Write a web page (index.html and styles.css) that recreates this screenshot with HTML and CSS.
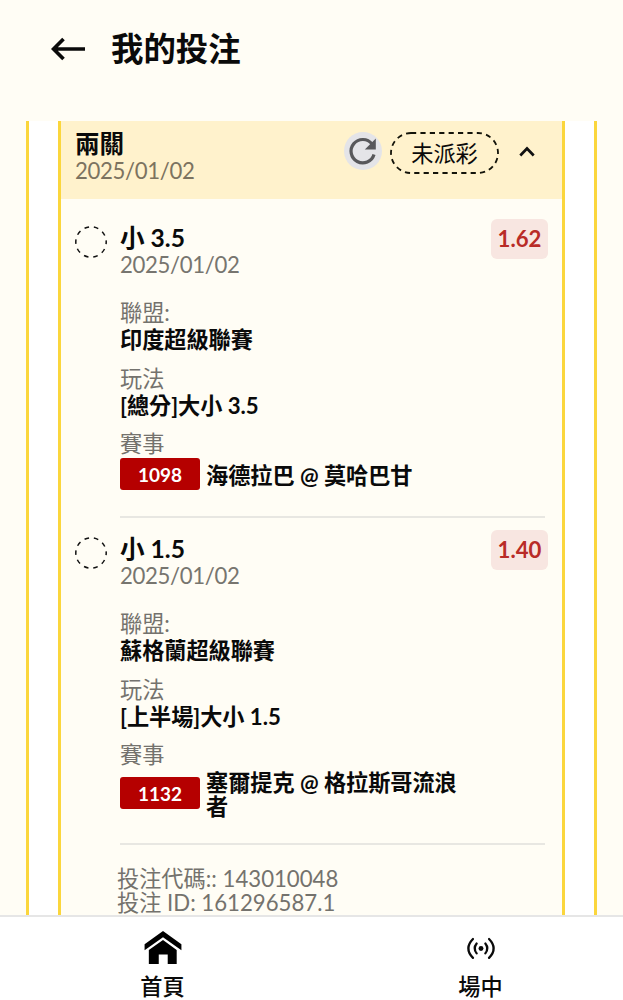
FILE: index.html
```
<!DOCTYPE html>
<html lang="zh-Hant">
<head>
  <meta charset="UTF-8">
  <meta name="viewport" content="width=device-width, initial-scale=1.0">
  <title>我的投注</title>
  <link rel="stylesheet" href="styles.css">
</head>
<body>
  <header class="top-bar">
    <svg class="back-icon" width="34" height="24" viewBox="0 0 34 24" fill="none" stroke="#0a0a0a" stroke-width="3.7">
      <path d="M34 12H3M12.5 2L2.5 12L12.5 22"/>
    </svg>
    <h1>我的投注</h1>
  </header>

  <main class="bets">
    <div class="bets-frame">
      <section class="card">
        <div class="card-header">
          <div class="card-title">
            <h2>兩關</h2>
            <p class="date">2025/01/02</p>
          </div>
          <div class="refresh">
            <svg width="38" height="38" viewBox="0 0 38 38">
              <path d="M30 22.5A11.7 11.7 0 1 1 28 12" fill="none" stroke="#58585b" stroke-width="3.2"/>
              <path d="M31.8 6.6V17.6H20.8Z" fill="#58585b"/>
            </svg>
          </div>
          <div class="status">
            <svg class="status-outline" width="109" height="42" viewBox="0 0 109 42">
              <rect x="1" y="1" width="107" height="40" rx="20" fill="none" stroke="#14140a" stroke-width="1.8" stroke-dasharray="5.2 4.2"/>
            </svg>
            <span>未派彩</span>
          </div>
          <svg class="chevron" width="16" height="11" viewBox="0 0 16 11" fill="none" stroke="#111" stroke-width="2.7">
            <path d="M1.3 9.5L8 2.5L14.7 9.5"/>
          </svg>
        </div>

        <article class="leg">
          <svg class="leg-state" width="32" height="32" viewBox="0 0 32 32">
            <circle cx="16" cy="16" r="15.2" fill="none" stroke="#111" stroke-width="1.5" stroke-dasharray="4.6 4.95" stroke-dashoffset="2.3"/>
          </svg>
          <div class="leg-body">
            <div class="leg-top">
              <div>
                <h3>小 3.5</h3>
                <p class="date">2025/01/02</p>
              </div>
              <span class="odds">1.62</span>
            </div>
            <dl>
              <dt>聯盟:</dt>
              <dd>印度超級聯賽</dd>
              <dt>玩法</dt>
              <dd>[總分]大小 3.5</dd>
              <dt>賽事</dt>
              <dd class="match"><span class="code">1098</span><span class="teams">海德拉巴 @ 莫哈巴甘</span></dd>
            </dl>
          </div>
        </article>

        <article class="leg">
          <svg class="leg-state" width="32" height="32" viewBox="0 0 32 32">
            <circle cx="16" cy="16" r="15.2" fill="none" stroke="#111" stroke-width="1.5" stroke-dasharray="4.6 4.95" stroke-dashoffset="2.3"/>
          </svg>
          <div class="leg-body">
            <div class="leg-top">
              <div>
                <h3>小 1.5</h3>
                <p class="date">2025/01/02</p>
              </div>
              <span class="odds">1.40</span>
            </div>
            <dl>
              <dt>聯盟:</dt>
              <dd>蘇格蘭超級聯賽</dd>
              <dt>玩法</dt>
              <dd>[上半場]大小 1.5</dd>
              <dt>賽事</dt>
              <dd class="match"><span class="code">1132</span><span class="teams">塞爾提克 @ 格拉斯哥流浪者</span></dd>
            </dl>
          </div>
        </article>

        <div class="bet-ids">
          <p>投注代碼:: 143010048</p>
          <p>投注 ID: 161296587.1</p>
        </div>
      </section>
    </div>
  </main>

  <nav class="bottom-nav">
    <a href="#">
      <svg width="40" height="36" viewBox="0 0 40 36" fill="#000">
        <path d="M20 0L39.5 14V20.5L20 6.5L0.5 20.5V14Z"/>
        <path d="M20 9.5L34.5 20V35H25V25H15.5V35H5V20Z"/>
      </svg>
      <span>首頁</span>
    </a>
    <a href="#">
      <svg width="40" height="36" viewBox="0 0 40 36" fill="none" stroke="#0a0a0a" stroke-width="2.4" stroke-linecap="round">
        <circle cx="20" cy="18.5" r="2.6" fill="#0a0a0a" stroke="none"/>
        <path d="M15.4 13.3Q11.2 18.5 15.4 23.7M24.6 13.3Q28.8 18.5 24.6 23.7"/>
        <path d="M11.5 8.5Q1.7 18.5 11.5 28.5M28.5 8.5Q38.3 18.5 28.5 28.5"/>
      </svg>
      <span>場中</span>
    </a>
  </nav>
</body>
</html>
```
FILE: styles.css
```
* {
  box-sizing: border-box;
}
body {
  margin: 0;
  height: 1000px;
  display: flex;
  flex-direction: column;
  overflow: hidden;
  font-family: Lato, "Noto Sans CJK TC", sans-serif;
  font-size: 22.2px;
  line-height: 27px;
  color: #0a0a0a;
  background-color: #fffdf5;
}
h1, h2, h3, p, dl, dd {
  margin: 0;
}
.top-bar {
  height: 121px;
  flex: none;
  display: flex;
  align-items: center;
  gap: 26px;
  padding: 0 51px 23px;
}
.top-bar h1 {
  font-size: 32.4px;
  line-height: 40px;
  font-weight: 700;
}
.bets {
  flex: 1;
  min-height: 0;
  overflow: hidden;
  padding: 0 26px;
}
.bets-frame {
  border: solid #fbd63c;
  border-width: 0 3px;
  padding: 0 29px;
  background-color: #fff;
}
.card {
  border: solid #fbd63c;
  border-width: 0 3px;
  background-color: #fffdf5;
  min-height: 800px;
}
.card-header {
  height: 78px;
  display: flex;
  align-items: flex-start;
  padding: 9px 27px 0 14px;
  background-color: #fff2cc;
}
.card-title {
  flex: 1;
}
.card-title h2 {
  font-size: 24.6px;
  line-height: 27px;
  font-weight: 700;
}
.date {
  color: #77756f;
  letter-spacing: -0.35px;
}
.card-title .date {
  color: #7c7360;
}
.refresh {
  width: 38px;
  height: 38px;
  margin: 2px 8px 0 0;
  border-radius: 50%;
  background-color: #e4e4e8;
}
.status {
  position: relative;
  width: 109px;
  height: 42px;
  margin-top: 2px;
  padding-top: 1px;
  display: flex;
  align-items: center;
  justify-content: center;
}
.status-outline {
  position: absolute;
  inset: 0;
}
.chevron {
  margin: 16px 0 0 20px;
}
.leg {
  display: flex;
  gap: 13px;
  padding: 20px 14px 0 14px;
}
.leg-state {
  flex: none;
  margin-top: 7px;
}
.leg-body {
  flex: 1;
}
.leg-top {
  display: flex;
  justify-content: space-between;
}
.leg-top h3 {
  margin-top: 5px;
  font-size: 24.6px;
  line-height: 27px;
  font-weight: 700;
}
.odds {
  width: 57px;
  height: 40px;
  border-radius: 6px;
  background-color: #f8e6e1;
  color: #b92b27;
  font-weight: 700;
  line-height: 40px;
  text-align: center;
}
.leg dl {
  margin: 21px 3px 0 0;
  padding-bottom: 26px;
  border-bottom: 2px solid #e8e7e2;
}
.leg dt {
  color: #74726d;
  height: 27px;
}
.leg dd {
  font-weight: 700;
  letter-spacing: -0.05px;
  margin-bottom: 11.5px;
}
.leg dd.match {
  display: flex;
  align-items: center;
  gap: 6px;
  margin: 1px 0 0;
  min-height: 32px;
}
.code {
  flex: none;
  width: 80px;
  height: 32px;
  border-radius: 3px;
  background-color: #b50000;
  color: #fff;
  font-size: 19px;
  line-height: 33px;
  text-align: center;
}
.teams {
  width: 252px;
  padding-top: 2px;
  margin-bottom: -2px;
  line-height: 24px;
}
.leg + .leg {
  padding-top: 12px;
}
.bet-ids {
  padding: 22px 0 0 56px;
  line-height: 24px;
  color: #74726d;
}
.bottom-nav {
  flex: none;
  width: 640px;
  height: 85px;
  padding-left: 4px;
  display: flex;
  border-top: 2px solid #e6e6e6;
  background-color: #fff;
}
.bottom-nav a {
  flex: 1;
  display: flex;
  flex-direction: column;
  align-items: center;
  gap: 8px;
  padding: 14px 1px 0 0;
  color: #0a0a0a;
  font-weight: 500;
  text-decoration: none;
}
```
